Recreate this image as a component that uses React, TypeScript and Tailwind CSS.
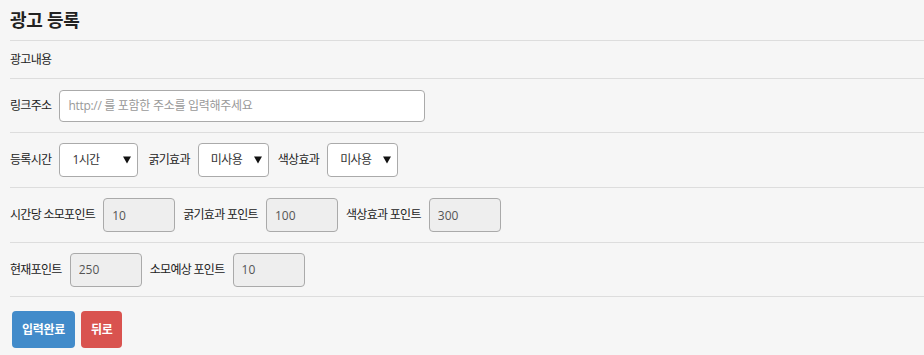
import { useState } from 'react'

const font = { fontFamily: '"Open Sans", "Noto Sans CJK KR", sans-serif' }

function Select({ value, width, options }: { value: string; width: string; options: string[] }) {
  const [v, setV] = useState(value)
  return (
    <div className={`relative ${width}`}>
      <select
        value={v}
        onChange={(e) => setV(e.target.value)}
        className="h-[34px] w-full appearance-none rounded-[4px] border border-[#aaa] bg-white pl-[12px] pr-6 text-[12px] tracking-[-0.6px] text-[#333] outline-none"
        style={font}
      >
        {options.map((o) => (
          <option key={o}>{o}</option>
        ))}
      </select>
      <svg
        className="pointer-events-none absolute right-[7px] top-[13px]"
        width="8"
        height="8"
        viewBox="0 0 8 8"
      >
        <path d="M0 0.5 H8 L4 7.5 Z" fill="#111" />
      </svg>
    </div>
  )
}

function ReadOnly({ value }: { value: string }) {
  return (
    <input
      readOnly
      value={value}
      className="h-[34px] w-[72px] rounded-[4px] border border-[#aaa] bg-[#eee] px-[8px] text-[12px] tracking-normal text-[#555] outline-none"
      style={font}
    />
  )
}

export default function App() {
  return (
    <div className="min-h-[355px] bg-[#f6f6f6] pl-[10px] text-[12px] tracking-[-0.7px] text-[#222]" style={font}>
      {/* Title */}
      <div className="flex h-[41px] items-center border-b border-[#ddd]">
        <h1 className="text-[18px] font-bold tracking-[-0.3px] text-[#222]">광고 등록</h1>
      </div>

      <div className="flex h-[38px] items-center border-b border-[#ddd]">광고내용</div>

      {/* Link */}
      <div className="flex h-[54px] items-center border-b border-[#ddd]">
        <span className="mr-2">링크주소</span>
        <input
          placeholder="http:// 를 포함한 주소를 입력해주세요"
          className="h-[32px] w-[366px] rounded-[4px] border border-[#aaa] bg-white px-[8px] text-[12px] tracking-[-0.3px] outline-none placeholder:text-[#999]"
          style={font}
        />
      </div>

      {/* Options */}
      <div className="flex h-[55px] items-center border-b border-[#ddd]">
        <span className="mr-2">등록시간</span>
        <Select value="1시간" width="w-[79px]" options={['1시간', '2시간', '3시간']} />
        <span className="ml-[10px] mr-2">굵기효과</span>
        <Select value="미사용" width="w-[71px]" options={['미사용', '사용']} />
        <span className="ml-[9px] mr-2">색상효과</span>
        <Select value="미사용" width="w-[71px]" options={['미사용', '사용']} />
      </div>

      {/* Points */}
      <div className="flex h-[55px] items-center border-b border-[#ddd]">
        <span className="mr-2">시간당 소모포인트</span>
        <ReadOnly value="10" />
        <span className="ml-[8px] mr-2">굵기효과 포인트</span>
        <ReadOnly value="100" />
        <span className="ml-[8px] mr-2">색상효과 포인트</span>
        <ReadOnly value="300" />
      </div>

      <div className="flex h-[54px] items-center border-b border-[#ddd]">
        <span className="mr-2">현재포인트</span>
        <ReadOnly value="250" />
        <span className="ml-[8px] mr-2">소모예상 포인트</span>
        <ReadOnly value="10" />
      </div>

      {/* Buttons */}
      <div className="flex gap-[6px] pl-[2px] pt-[14px] tracking-[-0.3px]">
        <button className="h-[37px] rounded-[4px] bg-[#428bca] px-[10px] text-[12px] font-bold text-white">
          입력완료
        </button>
        <button className="h-[37px] rounded-[4px] bg-[#d9534f] px-[10px] text-[12px] font-bold text-white">
          뒤로
        </button>
      </div>
    </div>
  )
}
